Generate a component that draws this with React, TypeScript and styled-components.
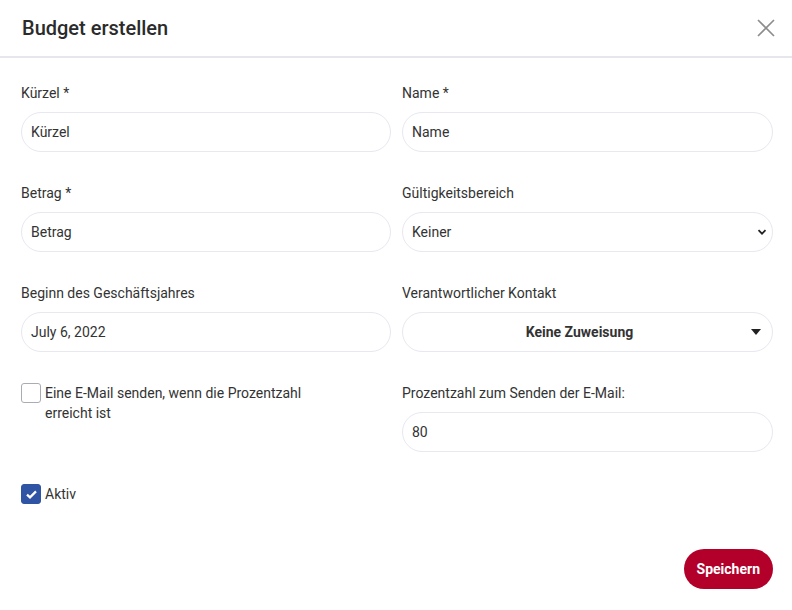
import styled, { createGlobalStyle } from "styled-components";

const GlobalStyle = createGlobalStyle`
  html, body {
    margin: 0;
    padding: 0;
    background: #ffffff;
    font-family: Roboto, "Liberation Sans", Arial, sans-serif;
    color: #333333;
  }
  * { box-sizing: border-box; }
`;

const Modal = styled.div`
  width: 792px;
  height: 610px;
  display: flex;
  flex-direction: column;
  background: #fff;
`;

const Header = styled.div`
  height: 58px;
  display: flex;
  align-items: center;
  justify-content: space-between;
  padding: 0 16px 0 22px;
  border-bottom: 2px solid #e6e6ee;
`;

const Title = styled.h2`
  margin: 0;
  font-size: 20px;
  font-weight: 500;
  color: #2b2b2b;
`;

const CloseButton = styled.button`
  border: none;
  background: none;
  padding: 0;
  width: 20px;
  height: 20px;
  display: flex;
  align-items: center;
  justify-content: center;
  cursor: pointer;
`;

const Body = styled.div`
  flex: 1;
  display: flex;
  flex-direction: column;
  padding: 25px 19px 21px 21px;
`;

const Grid = styled.div`
  display: grid;
  grid-template-columns: 370px 371px;
  column-gap: 11px;
  row-gap: 31px;
`;

const Field = styled.div`
  display: flex;
  flex-direction: column;
  gap: 9px;
`;

const Label = styled.label`
  font-size: 14px;
  line-height: 20px;
  color: #333;
`;

const Input = styled.input`
  height: 40px;
  width: 100%;
  border: 1px solid #e7e8f0;
  border-radius: 20px;
  padding: 0 9px;
  font-family: inherit;
  font-size: 14px;
  color: #333;
  background: #fff;
  outline: none;
  &::placeholder { color: #333; }
`;

const SelectBox = styled.div<{ centered?: boolean; bold?: boolean }>`
  position: relative;
  height: 40px;
  width: 100%;
  border: 1px solid #e7e8f0;
  border-radius: 20px;
  padding: ${(p) => (p.centered ? "0 26px 0 10px" : "0 9px")};
  display: flex;
  align-items: center;
  justify-content: ${(p) => (p.centered ? "center" : "flex-start")};
  font-size: 14px;
  font-weight: ${(p) => (p.bold ? 700 : 400)};
  color: #333;
`;

const SelectIcon = styled.span<{ right: number }>`
  position: absolute;
  right: ${(p) => p.right}px;
  top: 50%;
  transform: translateY(-50%);
  display: flex;
`;

const CheckRow = styled.div`
  display: flex;
  align-items: flex-start;
  gap: 4px;
  font-size: 14px;
  line-height: 20px;
  color: #333;
`;

const Box = styled.span<{ checked?: boolean }>`
  flex: none;
  width: 20px;
  height: 20px;
  border-radius: 3px;
  border: 1px solid ${(p) => (p.checked ? "#2f54a3" : "#a9acb3")};
  background: ${(p) => (p.checked ? "#2f54a3" : "#fff")};
  display: flex;
  align-items: center;
  justify-content: center;
`;

const CheckText = styled.span`
  max-width: 270px;
`;

const ActiveRow = styled(CheckRow)`
  margin-top: 32px;
`;

const Footer = styled.div`
  margin-top: auto;
  display: flex;
  justify-content: flex-end;
`;

const SaveButton = styled.button`
  height: 40px;
  padding: 0 13px;
  border: none;
  border-radius: 20px;
  background: #b3002a;
  color: #fff;
  font-family: inherit;
  font-size: 14px;
  font-weight: 700;
  cursor: pointer;
`;

export default function App() {
  return (
    <>
      <GlobalStyle />
      <Modal>
        <Header>
          <Title>Budget erstellen</Title>
          <CloseButton aria-label="Schließen">
            <svg width="18" height="18" viewBox="0 0 18 18">
              <path d="M1 1 L17 17 M17 1 L1 17" stroke="#8c8c8c" strokeWidth="1.6" />
            </svg>
          </CloseButton>
        </Header>
        <Body>
          <Grid>
            <Field>
              <Label>Kürzel *</Label>
              <Input placeholder="Kürzel" />
            </Field>
            <Field>
              <Label>Name *</Label>
              <Input placeholder="Name" />
            </Field>
            <Field>
              <Label>Betrag *</Label>
              <Input placeholder="Betrag" />
            </Field>
            <Field>
              <Label>Gültigkeitsbereich</Label>
              <SelectBox>
                Keiner
                <SelectIcon right={5}>
                  <svg width="10" height="10" viewBox="0 0 10 10">
                    <path d="M1.5 3.2 L5 6.7 L8.5 3.2" stroke="#222" strokeWidth="1.8" fill="none" />
                  </svg>
                </SelectIcon>
              </SelectBox>
            </Field>
            <Field>
              <Label>Beginn des Geschäftsjahres</Label>
              <Input defaultValue="July 6, 2022" />
            </Field>
            <Field>
              <Label>Verantwortlicher Kontakt</Label>
              <SelectBox centered bold>
                Keine Zuweisung
                <SelectIcon right={11}>
                  <svg width="10" height="6" viewBox="0 0 10 6">
                    <path d="M0 0 L10 0 L5 6 Z" fill="#222" />
                  </svg>
                </SelectIcon>
              </SelectBox>
            </Field>
            <CheckRow>
              <Box />
              <CheckText>Eine E-Mail senden, wenn die Prozentzahl erreicht ist</CheckText>
            </CheckRow>
            <Field>
              <Label>Prozentzahl zum Senden der E-Mail:</Label>
              <Input defaultValue="80" />
            </Field>
          </Grid>
          <ActiveRow>
            <Box checked>
              <svg width="11" height="9" viewBox="0 0 11 9">
                <path d="M1 4.6 L4 7.4 L10 1.4" stroke="#fff" strokeWidth="2.2" fill="none" />
              </svg>
            </Box>
            <span>Aktiv</span>
          </ActiveRow>
          <Footer>
            <SaveButton>Speichern</SaveButton>
          </Footer>
        </Body>
      </Modal>
    </>
  );
}
